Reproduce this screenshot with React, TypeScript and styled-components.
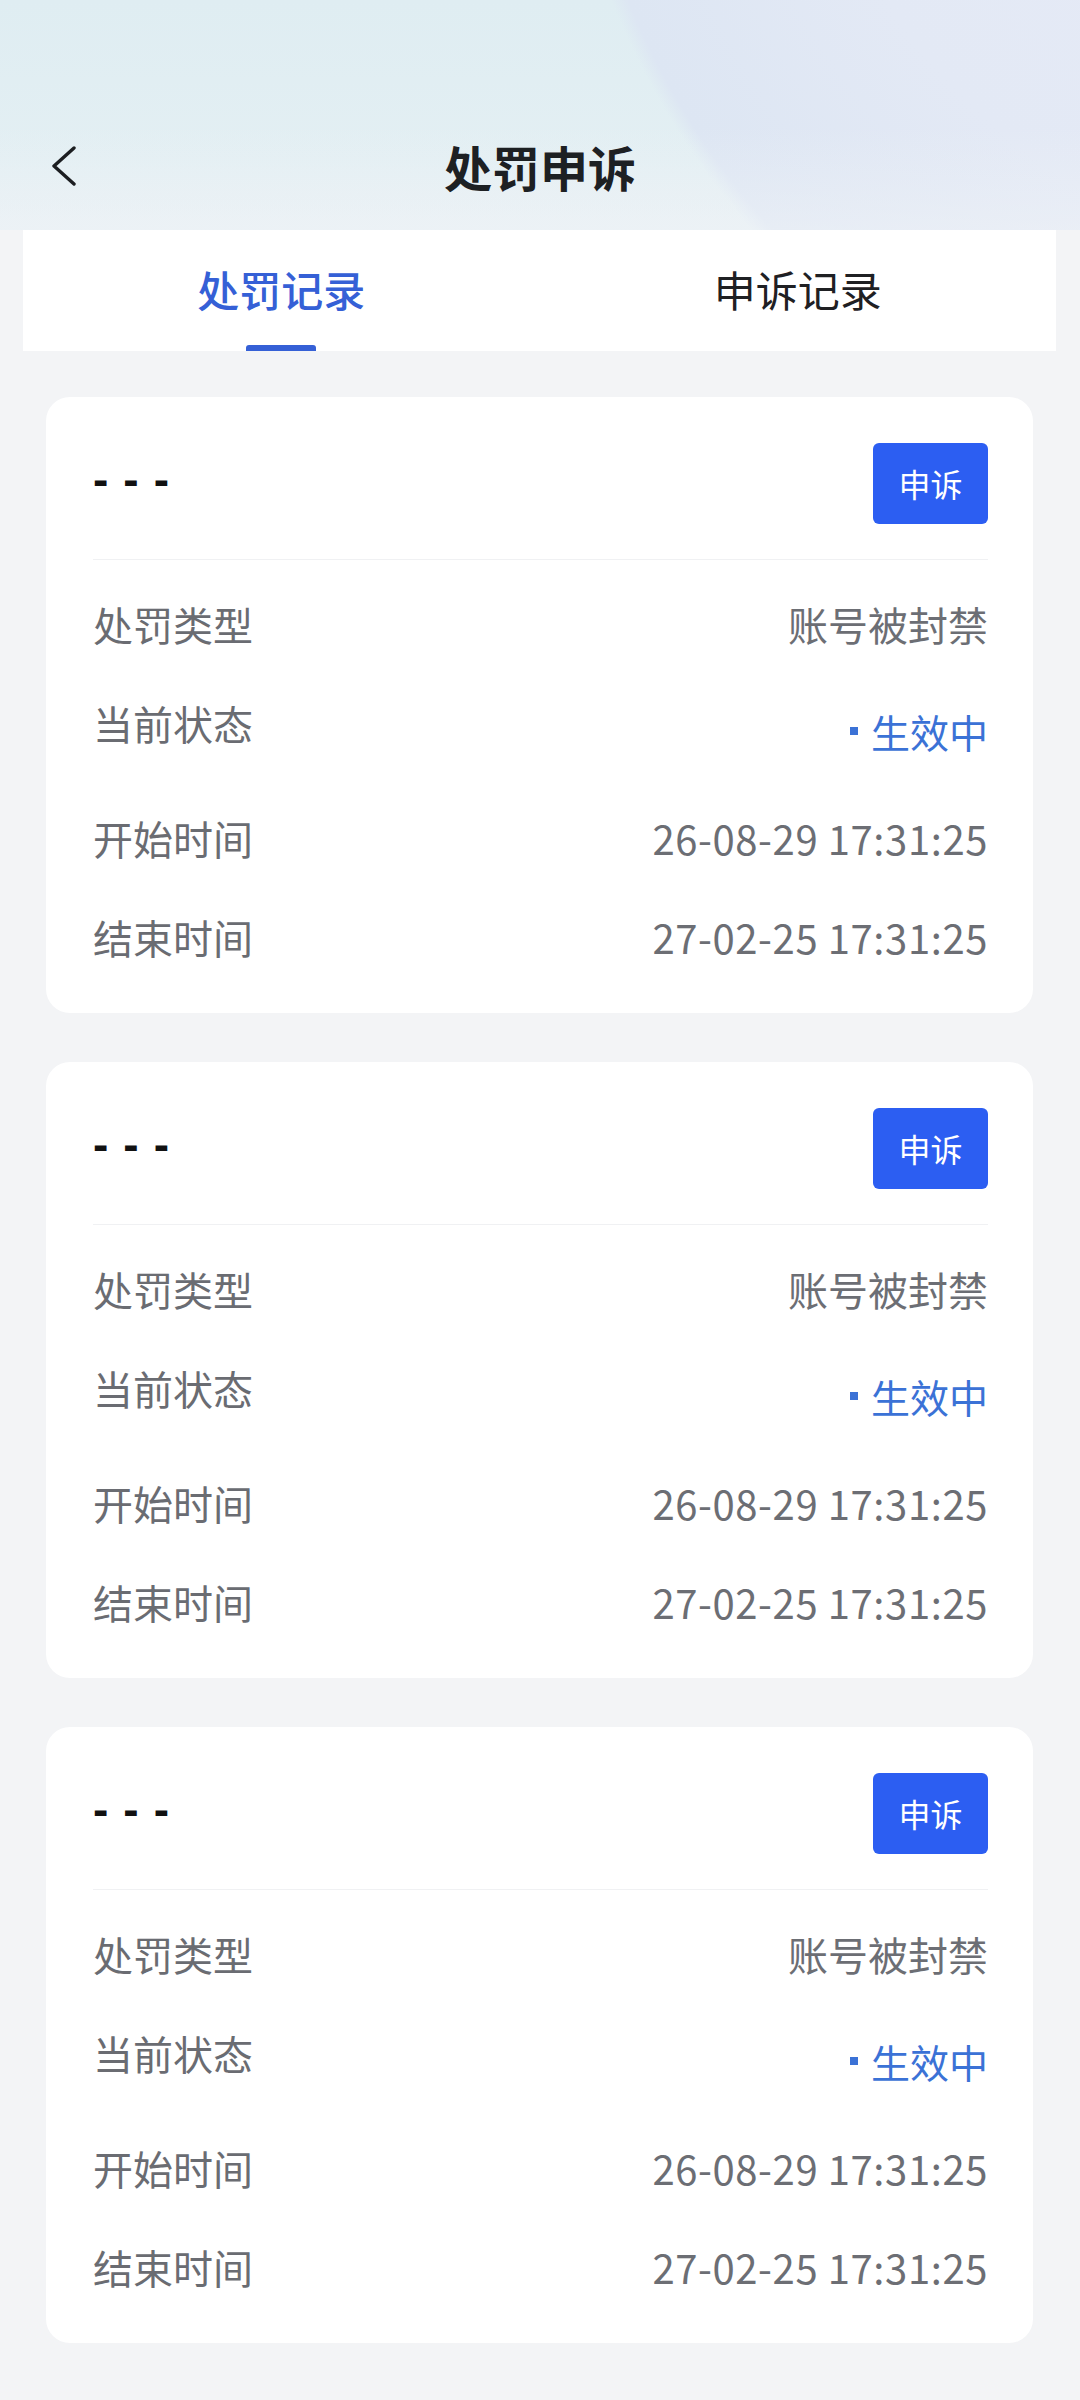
import React from "react";
import styled, { createGlobalStyle } from "styled-components";

const GlobalStyle = createGlobalStyle`
  html, body {
    margin: 0;
    padding: 0;
    background: #f3f4f6;
  }
  body {
    font-family: "Noto Sans CJK SC", "Noto Sans", Roboto, sans-serif;
    -webkit-font-smoothing: antialiased;
  }
  * { box-sizing: border-box; }
`;

const Page = styled.div`
  width: 1080px;
  min-height: 2400px;
  background: #f3f4f6;
`;

const Header = styled.header`
  height: 230px;
  padding-top: 118px;
  background:
    linear-gradient(180deg, rgba(240, 243, 247, 0) 55%, rgba(240, 243, 247, 0.55) 100%),
    radial-gradient(circle 800px at 1359px -300px, #e8ebf7 0, #e3e9f5 560px, #dde6f3 790px, rgba(221, 230, 243, 0) 806px),
    linear-gradient(180deg, #dfedf2 0%, #e3eff3 70%, #e7f0f4 100%);
`;

const NavBar = styled.div`
  height: 96px;
  display: grid;
  grid-template-columns: 1fr auto 1fr;
  align-items: center;
`;

const BackButton = styled.button`
  justify-self: start;
  margin-left: 49px;
  width: 30px;
  height: 48px;
  padding: 0;
  border: none;
  background: transparent;
  display: flex;
  align-items: center;
  justify-content: center;
  color: #1c1e21;
`;

const Title = styled.h1`
  margin: 0;
  font-size: 48px;
  font-weight: 700;
  color: #1d2023;
  letter-spacing: 0;
  line-height: 96px;
`;

const Tabs = styled.nav`
  margin: 0 24px 0 23px;
  height: 121px;
  background: #ffffff;
  display: grid;
  grid-template-columns: 1fr 1fr;
`;

const Tab = styled.div<{ $active?: boolean }>`
  display: flex;
  flex-direction: column;
  align-items: center;
  padding-top: 29px;
  font-size: 42px;
  line-height: 60px;
  font-weight: ${(p) => (p.$active ? 500 : 400)};
  color: ${(p) => (p.$active ? "#3560d6" : "#1f2023")};
`;

const Indicator = styled.span`
  margin-top: auto;
  width: 70px;
  height: 6px;
  border-radius: 3px 3px 0 0;
  background: #3560d6;
`;

const List = styled.main`
  display: flex;
  flex-direction: column;
  gap: 49px;
  padding: 46px 47px 46px 46px;
`;

const Card = styled.section`
  background: #ffffff;
  border-radius: 24px;
  padding: 46px 45px 48px 47px;
`;

const CardHead = styled.div`
  height: 117px;
  padding-bottom: 36px;
  border-bottom: 1px solid #f0f1f3;
  display: flex;
  align-items: center;
  justify-content: space-between;
`;

const Placeholder = styled.span`
  font-family: "Liberation Sans", Arial, sans-serif;
  font-size: 46px;
  font-weight: 700;
  color: #111111;
  letter-spacing: 15px;
  line-height: 1;
  margin-bottom: 8px;
`;

const AppealButton = styled.button`
  width: 115px;
  height: 81px;
  border: none;
  border-radius: 6px;
  background: #2c5ef2;
  color: #ffffff;
  font-family: "Noto Sans CJK SC", sans-serif;
  font-size: 32px;
  padding: 0;
`;

const Rows = styled.dl`
  margin: 0;
  padding-top: 36px;
  display: flex;
  flex-direction: column;
  gap: 43px;
`;

const Row = styled.div`
  display: flex;
  align-items: flex-start;
  justify-content: space-between;
  font-size: 40px;
  line-height: 56px;
`;

const Label = styled.dt`
  color: #6a6c72;
`;

const Value = styled.dd<{ $numeric?: boolean }>`
  margin: 0;
  color: #6c6e74;
  letter-spacing: ${(p) => (p.$numeric ? "0.6px" : "0")};
`;

const StatusTag = styled.dd`
  margin: 0;
  height: 72px;
  display: flex;
  align-items: center;
  gap: 13px;
  color: #3b72d6;
  font-size: 39px;
`;

const Dot = styled.span`
  width: 8px;
  height: 8px;
  background: #3b72d6;
`;

const ChevronLeft = () => (
  <svg width="24" height="40" viewBox="0 0 24 40" fill="none">
    <polyline
      points="22,2 2,20 22,38"
      stroke="currentColor"
      strokeWidth="3.4"
      strokeLinecap="round"
      strokeLinejoin="round"
    />
  </svg>
);

const records = [
  { type: "账号被封禁", status: "生效中", start: "26-08-29 17:31:25", end: "27-02-25 17:31:25" },
  { type: "账号被封禁", status: "生效中", start: "26-08-29 17:31:25", end: "27-02-25 17:31:25" },
  { type: "账号被封禁", status: "生效中", start: "26-08-29 17:31:25", end: "27-02-25 17:31:25" },
];

export default function App() {
  return (
    <Page>
      <GlobalStyle />
      <Header>
        <NavBar>
          <BackButton aria-label="返回">
            <ChevronLeft />
          </BackButton>
          <Title>处罚申诉</Title>
          <span />
        </NavBar>
      </Header>
      <Tabs>
        <Tab $active>
          处罚记录
          <Indicator />
        </Tab>
        <Tab>申诉记录</Tab>
      </Tabs>
      <List>
        {records.map((r, i) => (
          <Card key={i}>
            <CardHead>
              <Placeholder>---</Placeholder>
              <AppealButton>申诉</AppealButton>
            </CardHead>
            <Rows>
              <Row>
                <Label>处罚类型</Label>
                <Value>{r.type}</Value>
              </Row>
              <Row>
                <Label>当前状态</Label>
                <StatusTag>
                  <Dot />
                  {r.status}
                </StatusTag>
              </Row>
              <Row>
                <Label>开始时间</Label>
                <Value $numeric>{r.start}</Value>
              </Row>
              <Row>
                <Label>结束时间</Label>
                <Value $numeric>{r.end}</Value>
              </Row>
            </Rows>
          </Card>
        ))}
      </List>
    </Page>
  );
}
